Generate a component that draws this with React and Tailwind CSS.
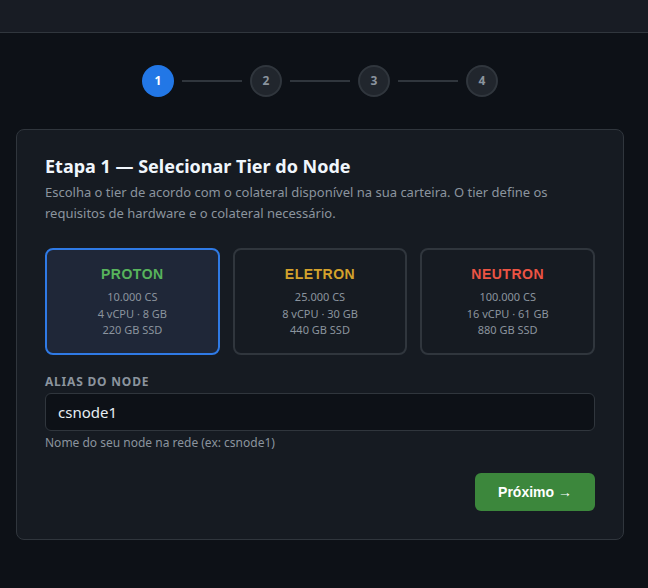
export default function App() {
  const tiers = [
    { name: "PROTON", color: "text-[#57b35c]", cs: "10.000 CS", cpu: "4 vCPU · 8 GB", ssd: "220 GB SSD", sel: true },
    { name: "ELETRON", color: "text-[#d4a22c]", cs: "25.000 CS", cpu: "8 vCPU · 30 GB", ssd: "440 GB SSD" },
    { name: "NEUTRON", color: "text-[#ec5444]", cs: "100.000 CS", cpu: "16 vCPU · 61 GB", ssd: "880 GB SSD" },
  ];
  const ui = { fontFamily: '"Noto Sans", "Open Sans", sans-serif' };
  const arial = { fontFamily: '"Liberation Sans", Arial, sans-serif' };
  return (
    <div className="min-h-[588px] w-[648px] bg-[#0d1117] text-[#e6edf3]" style={ui}>
      <div className="h-[33px] bg-[#181c24] border-b border-[#30363d]" />
      <div className="ml-4 w-[608px]">
        <div className="flex items-center justify-center pt-[32px] pb-[32px]">
          {[1, 2, 3, 4].map((n, i) => (
            <div key={n} className="flex items-center">
              {i > 0 && <div className="mx-2 h-[2px] w-[60px] bg-[#30363d]" />}
              <div
                className={
                  n === 1
                    ? "flex h-8 w-8 items-center justify-center rounded-full bg-[#2277e6] text-[12px] font-bold text-white"
                    : "flex h-8 w-8 items-center justify-center rounded-full border-2 border-[#30363d] bg-[#21262d] text-[12px] font-bold text-[#8b949e]"
                }
              >
                {n}
              </div>
            </div>
          ))}
        </div>
        <div className="rounded-lg border border-[#30363d] bg-[#161b22] px-7 pt-[23px] pb-7">
          <h2 className="text-[18px] font-bold leading-[26px] text-[#f0f6fc]">Etapa 1 — Selecionar Tier do Node</h2>
          <p className="mt-[3px] text-[13px] leading-[21px] text-[#8b949e]">
            Escolha o tier de acordo com o colateral disponível na sua carteira. O tier define os requisitos de hardware e o colateral necessário.
          </p>
          <div className="mt-[24px] grid grid-cols-3 gap-[13px]">
            {tiers.map((t) => (
              <div
                key={t.name}
                className={
                  t.sel
                    ? "flex h-[107px] flex-col items-center rounded-lg border-2 border-[#2f7ae5] bg-[#1f2738] pt-[14px]"
                    : "flex h-[107px] flex-col items-center rounded-lg border-2 border-[#30363d] pt-[14px]"
                }
              >
                <div className={"text-[14px] font-bold tracking-[0.5px] leading-[20px] " + t.color} style={arial}>
                  {t.name}
                </div>
                <div className="mt-[5px] text-center text-[11px] leading-[16.5px] text-[#8b949e]">
                  <div>{t.cs}</div>
                  <div>{t.cpu}</div>
                  <div>{t.ssd}</div>
                </div>
              </div>
            ))}
          </div>
          <div className="mt-[19px] text-[12px] font-bold uppercase tracking-[0.8px] leading-[16px] text-[#8b949e]">
            Alias do Node
          </div>
          <div className="mt-[3px] flex h-[38px] items-center rounded-md border border-[#30363d] bg-[#0d1117] px-3 text-[15px] text-[#e6edf3]">
            csnode1
          </div>
          <div className="mt-[4px] text-[12px] leading-[16px] text-[#8b949e]">Nome do seu node na rede (ex: csnode1)</div>
          <div className="mt-[22px] flex justify-end">
            <div
              className="flex h-[38px] w-[120px] items-center justify-center rounded-md bg-[#3c873c] text-[14px] font-bold text-white"
              style={arial}
            >
              Próximo →
            </div>
          </div>
        </div>
      </div>
    </div>
  );
}
